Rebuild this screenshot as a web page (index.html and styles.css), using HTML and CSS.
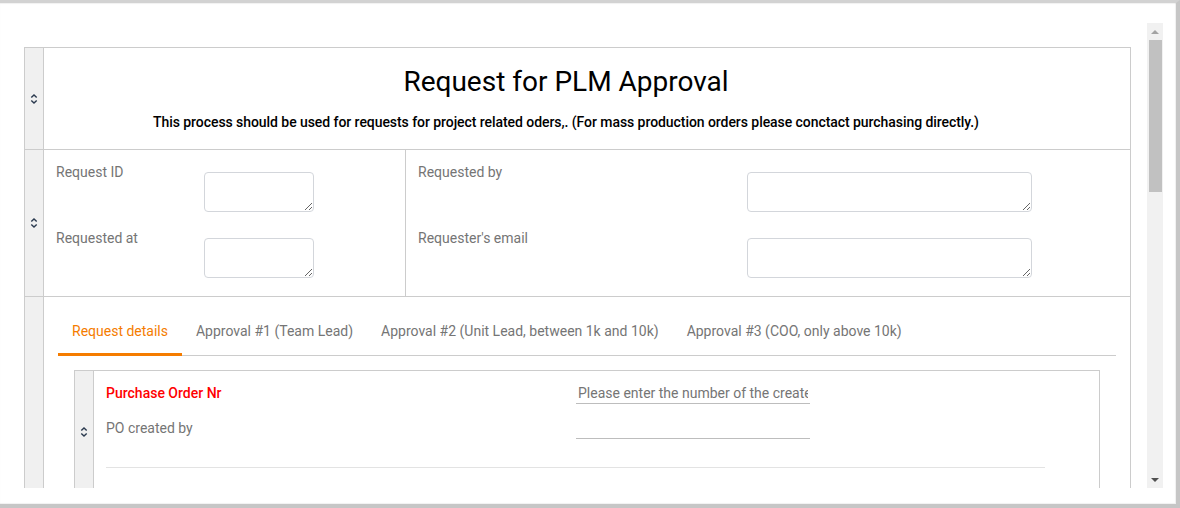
FILE: index.html
```html
<!DOCTYPE html>
<html lang="en">
<head>
<meta charset="utf-8">
<title>Request for PLM Approval</title>
<link rel="stylesheet" href="styles.css">
</head>
<body>
<div class="frame">
  <div class="viewport">
    <div class="content">
      <div class="form">
        <div class="row row-head">
          <div class="handle">
            <svg class="sort-icon" width="8" height="12" viewBox="0 0 8 12"><path d="M1.3 4.6 L4 1.9 L6.7 4.6 M1.3 7.4 L4 10.1 L6.7 7.4" fill="none" stroke="#2b3a4f" stroke-width="1.4"/></svg>
          </div>
          <div class="head-body">
            <h1 class="title">Request for PLM Approval</h1>
            <p class="subtitle">This process should be used for requests for project related oders,. (For mass production orders please conctact purchasing directly.)</p>
          </div>
        </div>
        <div class="row row-fields">
          <div class="handle">
            <svg class="sort-icon" width="8" height="12" viewBox="0 0 8 12"><path d="M1.3 4.6 L4 1.9 L6.7 4.6 M1.3 7.4 L4 10.1 L6.7 7.4" fill="none" stroke="#2b3a4f" stroke-width="1.4"/></svg>
          </div>
          <div class="col col-left">
            <div class="field"><label class="flabel lw-left">Request ID</label><textarea class="ta ta-small"></textarea></div>
            <div class="field"><label class="flabel lw-left">Requested at</label><textarea class="ta ta-small"></textarea></div>
          </div>
          <div class="col col-right">
            <div class="field"><label class="flabel lw-right">Requested by</label><textarea class="ta ta-wide"></textarea></div>
            <div class="field"><label class="flabel lw-right">Requester's email</label><textarea class="ta ta-wide"></textarea></div>
          </div>
        </div>
        <div class="row row-tabs">
          <div class="handle"></div>
          <div class="tabs-body">
            <div class="tabs">
              <div class="tab active">Request details</div>
              <div class="tab">Approval #1 (Team Lead)</div>
              <div class="tab">Approval #2 (Unit Lead, between 1k and 10k)</div>
              <div class="tab">Approval #3 (COO, only above 10k)</div>
            </div>
            <div class="panel">
              <div class="handle">
                <svg class="sort-icon" width="8" height="12" viewBox="0 0 8 12"><path d="M1.3 4.6 L4 1.9 L6.7 4.6 M1.3 7.4 L4 10.1 L6.7 7.4" fill="none" stroke="#2b3a4f" stroke-width="1.4"/></svg>
              </div>
              <div class="panel-body">
                <div class="prow"><span class="plabel required">Purchase Order Nr</span><input class="pinput" type="text" placeholder="Please enter the number of the created PO"></div>
                <div class="prow"><span class="plabel">PO created by</span><input class="pinput" type="text"></div>
                <div class="sep"></div>
              </div>
            </div>
          </div>
        </div>
      </div>
    </div>
    <div class="scrollbar">
      <div class="sb-btn"><span class="tri-up"></span></div>
      <div class="sb-thumb"></div>
      <div class="sb-space"></div>
      <div class="sb-btn"><span class="tri-down"></span></div>
    </div>
  </div>
</div>
</body>
</html>
```

FILE: styles.css
```css
* { box-sizing: border-box; }
html, body { margin: 0; padding: 0; background: #fff; }
body {
  font-family: Roboto, "Liberation Sans", Arial, sans-serif;
  font-size: 14px;
  color: #000;
}
.frame {
  width: 1180px;
  height: 508px;
  border-top: 3px solid #d2d2d2;
  border-right: 4px solid #c6c6c6;
  border-bottom: 4px solid #c6c6c6;
  box-shadow: inset 0 1px 1px rgba(0,0,0,0.06), inset -1px -1px 1px rgba(0,0,0,0.06);
  overflow: hidden;
}
.viewport {
  display: flex;
  margin: 20px 0 0 8px;
  width: 1155px;
  height: 465px;
}
.content {
  flex: 1;
  overflow: hidden;
  padding: 24px 16px 0 16px;
}
.form {
  border: 1px solid #cccccc;
  border-bottom: none;
}
.row {
  display: flex;
  border-bottom: 1px solid #cccccc;
}
.handle {
  width: 19px;
  flex: none;
  background: #f0f0f0;
  border-right: 1px solid #cccccc;
  display: flex;
  align-items: center;
  justify-content: center;
}
.sort-icon { display: block; }

/* header row */
.head-body {
  flex: 1;
  padding: 17px 42px 17px 0;
  text-align: center;
}
.title {
  margin: 0;
  font-size: 28px;
  font-weight: 400;
  line-height: 34px;
  color: #000;
}
.subtitle {
  margin: 13px 0 0;
  font-size: 14px;
  font-weight: 500;
  line-height: 20px;
  letter-spacing: -0.06px;
  color: #000;
}

/* fields row */
.col {
  padding: 12px 0 18px 12px;
  display: flex;
  flex-direction: column;
  gap: 16px;
}
.col-left {
  width: 362px;
  border-right: 1px solid #cccccc;
}
.col-right { flex: 1; }
.field { display: flex; align-items: flex-start; height: 50px; }
.flabel {
  line-height: 20px;
  color: #757575;
  font-size: 14px;
}
.lw-left { width: 148px; }
.lw-right { width: 329px; }
.ta {
  margin-top: 10px;
  height: 40px;
  border: 1px solid #d3d6db;
  border-radius: 4px;
  background: #fff;
  font-family: inherit;
  font-size: 14px;
  padding: 4px 6px;
  outline: none;
}
.ta-small { width: 110px; }
.ta-wide { width: 285px; }

/* tabs row */
.row-tabs { border-bottom: none; }
.tabs-body {
  flex: 1;
  padding: 13px 14px 0;
}
.tabs {
  display: flex;
  border-bottom: 1px solid #cccccc;
}
.tab {
  padding: 11px 14px 12px;
  line-height: 20px;
  color: #757575;
  border-bottom: 3px solid transparent;
  margin-bottom: -1px;
  white-space: nowrap;
}
.tab.active {
  color: #f57c00;
  border-bottom-color: #f57c00;
}
.panel {
  display: flex;
  margin: 14px 16px 0;
  border: 1px solid #cccccc;
}
.panel-body {
  flex: 1;
  padding: 11px 0 25px 12px;
  display: flex;
  flex-direction: column;
  gap: 13px;
}
.prow {
  display: flex;
  align-items: center;
  height: 22px;
}
.plabel {
  width: 470px;
  color: #757575;
  line-height: 20px;
}
.plabel.required {
  color: #ff0000;
  font-weight: 500;
}
.pinput {
  width: 234px;
  height: 22px;
  border: none;
  border-bottom: 1px solid #bdbdbd;
  padding: 0 2px;
  font-family: inherit;
  font-size: 14px;
  color: #333;
  background: transparent;
  outline: none;
}
.pinput::placeholder { color: #757575; opacity: 1; }
.sep {
  height: 1px;
  background: #e3e3e3;
  margin: 15px 54px 0 0;
}

/* scrollbar */
.scrollbar {
  width: 16px;
  flex: none;
  background: #f1f1f1;
  display: flex;
  flex-direction: column;
  align-items: stretch;
}
.sb-btn {
  height: 17px;
  display: flex;
  align-items: center;
  justify-content: center;
}
.tri-up {
  width: 0; height: 0;
  border-left: 4px solid transparent;
  border-right: 4px solid transparent;
  border-bottom: 4px solid #a3a3a3;
}
.tri-down {
  width: 0; height: 0;
  border-left: 4px solid transparent;
  border-right: 4px solid transparent;
  border-top: 4px solid #505050;
}
.sb-thumb {
  height: 152px;
  margin: 0 1px 0 2px;
  background: #c1c1c1;
}
.sb-space { flex: 1; }
```
